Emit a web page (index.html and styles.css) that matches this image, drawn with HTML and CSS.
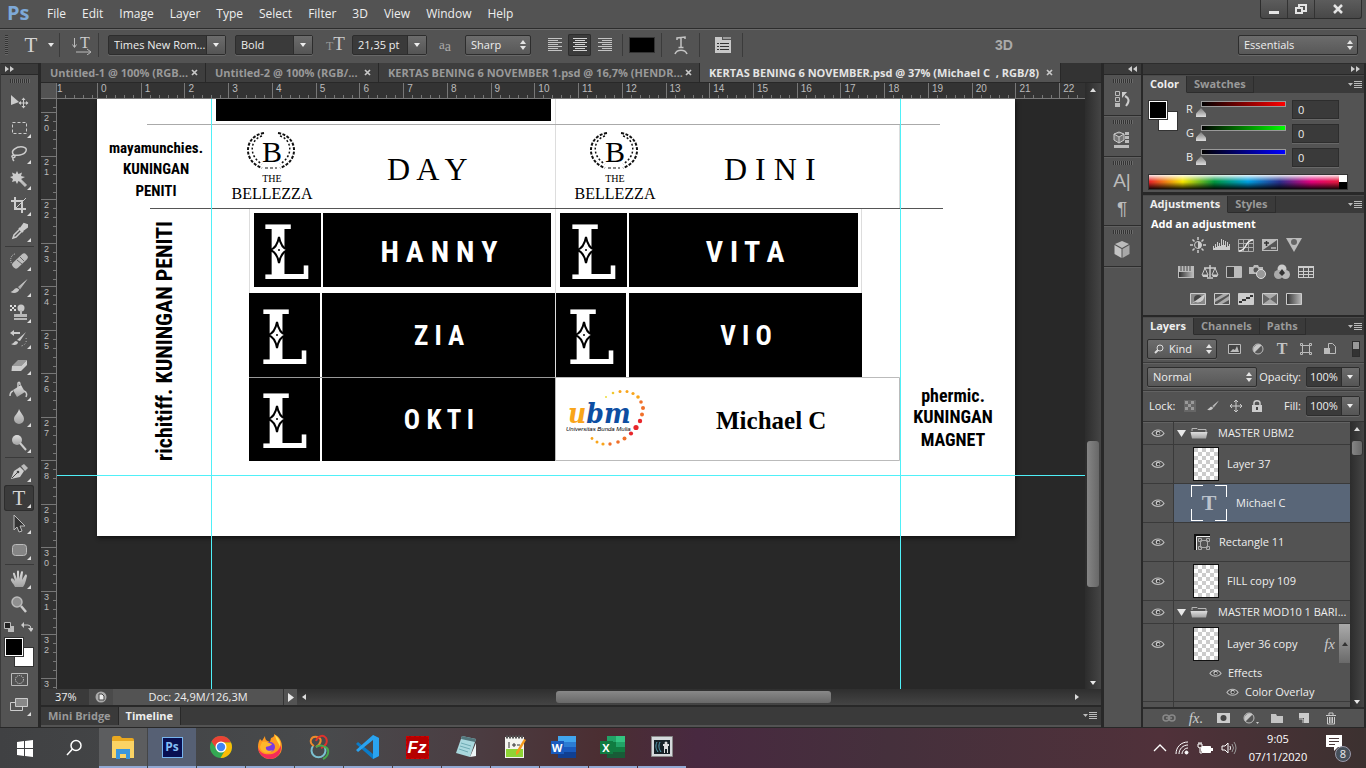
FILE: index.html
```html
<!DOCTYPE html>
<html lang="en">
<head>
<meta charset="utf-8">
<title>Photoshop - KERTAS BENING 6 NOVEMBER.psd</title>
<link rel="stylesheet" href="styles.css">
</head>
<body>
<svg class="defs" aria-hidden="true">
  <defs>
    <linearGradient id="metal" x1="0" y1="0" x2="0" y2="1"><stop offset="0" stop-color="#dedede"/><stop offset="1" stop-color="#a2a2a2"/></linearGradient>
    <linearGradient id="fade" x1="0" x2="1"><stop offset="0" stop-color="#333"/><stop offset="1" stop-color="#bbb"/></linearGradient>
    <pattern id="checker" width="8" height="8" patternUnits="userSpaceOnUse"><path fill="#fff" d="M0 0h8v8H0z"/><path fill="#ccc" d="M0 0h4v4H0zM4 4h4v4H4z"/></pattern>
  </defs>
  <symbol id="eye" viewBox="0 0 14 10"><path d="M1 5.5C3.500.8 10.500.8 13 5.500 10 9.500 4 9.500 1 5.500z" fill="#4b4b4b" stroke="#bdbdbd" stroke-width="1.200"/><circle cx="7" cy="5" r="2.300" fill="#ccc"/><circle cx="7.300" cy="5.300" r="1.300" fill="#333"/></symbol>
  <symbol id="folder" viewBox="0 0 18 12"><path d="M2 4V1.500h5l1 1h8V5" fill="none" stroke="#b5b5b5"/><path d="M.5 5h17L16 11.500H2z" fill="url(#metal)"/></symbol>
  <symbol id="caret" viewBox="0 0 6 4"><path d="M0 0h6L3 4z" fill="#e8e8e8"/></symbol>
  <symbol id="menu" viewBox="0 0 14 8"><path d="M0 2h5L2.500 5z" fill="#bbb"/><path d="M6 .5h8M6 2.500h8M6 4.500h8M6 6.500h8" stroke="#bbb"/></symbol>
  <symbol id="close" viewBox="0 0 7 7"><path d="M1 1l5 5M6 1L1 6" stroke="#c8c8c8" stroke-width="1.700"/></symbol>
  <symbol id="halfcircle" viewBox="0 0 14 14"><circle cx="7" cy="7" r="5" fill="#555" stroke="#bbb"/><path d="M3.500 10.500A5 5 0 0 1 10.500 3.500z" fill="#c8c8c8"/></symbol>
  <symbol id="brush" viewBox="0 0 20 20"><path d="M18.500 2L9 10l2 2.500z" fill="url(#metal)"/><path d="M8 11c-3 0-3 3-6.500 4 3 2 8 1 8.700-2.500z" fill="#c6c6c6"/></symbol>
</svg>

<div class="app">
  <header class="menubar">
    <span class="brand">Ps</span>
    <nav class="menus">
      <button>File</button><button>Edit</button><button>Image</button><button>Layer</button><button>Type</button><button>Select</button><button>Filter</button><button>3D</button><button>View</button><button>Window</button><button>Help</button>
    </nav>
    <div class="winctl">
      <button aria-label="Minimize"><svg width="12" height="12"><path d="M1 8h10v3H1z" fill="#e4e4e4"/></svg></button>
      <button aria-label="Restore"><svg width="14" height="12" fill="none" stroke="#e4e4e4" stroke-width="2"><path d="M5 4V2h7v6H9"/><path d="M2 5h6v5H2z"/></svg></button>
      <button class="wide" aria-label="Close"><svg width="12" height="12"><path d="M2 2l8 8M10 2l-8 8" stroke="#e4e4e4" stroke-width="2.500"/></svg></button>
    </div>
  </header>

  <div class="options">
    <span class="vgrip"></span>
    <button class="opt toolname" aria-label="Type tool"><span class="serif-t">T</span><svg width="6" height="4"><use href="#caret"/></svg></button>
    <button class="opt orient" aria-label="Toggle text orientation"><svg width="20" height="20" fill="none" stroke="#bbb"><text x="13" y="13" class="ot">T</text><path d="M2.500 3v9M.5 9.500l2 3 2-3M4 17h14M15 14l4 3-4 3"/></svg></button>
    <label class="combo w-font"><select aria-label="Font family"><option>Times New Rom...</option></select></label>
    <label class="combo w-style"><select aria-label="Font style"><option>Bold</option></select></label>
    <span class="tt"><small>T</small><b>T</b></span>
    <label class="combo w-size"><select aria-label="Font size"><option>21,35 pt</option></select></label>
    <span class="aa">a<sub>a</sub></span>
    <label class="drop w-aa"><select aria-label="Anti-aliasing"><option>Sharp</option></select></label>
    <div class="aligns">
      <button aria-label="Left align"><svg width="14" height="14" stroke="#c4c4c4"><path d="M0 .5h14M0 2.500h10M0 4.500h14M0 6.500h10M0 8.500h14M0 10.500h10M0 12.500h14"/></svg></button>
      <button class="on" aria-label="Center align"><svg width="14" height="14" stroke="#d4d4d4"><path d="M0 .5h14M2 2.500h10M0 4.500h14M2 6.500h10M0 8.500h14M2 10.500h10M0 12.500h14"/></svg></button>
      <button aria-label="Right align"><svg width="14" height="14" stroke="#c4c4c4"><path d="M0 .5h14M4 2.500h10M0 4.500h14M4 6.500h10M0 8.500h14M4 10.500h10M0 12.500h14"/></svg></button>
    </div>
    <button class="opt color" aria-label="Text color"><i></i></button>
    <button class="opt warp" aria-label="Warp text"><svg width="16" height="20" fill="none" stroke="#c4c4c4"><path d="M4 5V3l8-1v2M8 3v9M5.500 12.500h5" stroke-width="1.500"/><path d="M2 19c2-5 10-5 12 0" stroke-width="1.600"/></svg></button>
    <button class="opt cpanel" aria-label="Character panel"><svg width="18" height="18"><path d="M1 1h7v3h9v13H1z" fill="#c8c8c8"/><path d="M9 2h8" stroke="#999" stroke-width="2"/><path d="M3 7.500h2M6 7.500h9M3 10.500h2M6 10.500h9M3 13.500h2M6 13.500h9" stroke="#333"/></svg></button>
    <b class="three">3D</b>
    <label class="drop w-ws"><select aria-label="Workspace"><option>Essentials</option></select></label>
  </div>

  <main class="work">
    <aside class="tools">
      <div class="head"><svg width="9" height="6" fill="#ccc"><path d="M0 0l4 3-4 3zM5 0l4 3-4 3z"/></svg></div>
      <div class="grip"></div>
      <button class="nt" aria-label="Move"><svg width="20" height="20"><path d="M2 3l8 7-8 3z" fill="#ccc"/><path d="M14.500 6.500v9M10 11h9" stroke="#ccc"/><path d="M12.500 8l2-2.500 2 2.500zM12.500 14l2 2.500 2-2.500zM12 9l-2.500 2 2.500 2zM17 9l2.500 2-2.500 2z" fill="#ccc"/></svg></button>
      <button aria-label="Marquee"><svg width="20" height="20"><path d="M3.500 4.500h14v11h-14z" fill="none" stroke="#ccc" stroke-dasharray="3 2"/></svg></button>
      <button aria-label="Lasso"><svg width="20" height="20" fill="none" stroke="#ccc" stroke-width="1.500"><path d="M5 11C0 7 8 2 14 3c6 1 3 7-3 8-3 .6-5 .3-6 0-2 0-3 2-1 2.500s3-1.500 1-2.500M4 13c0 2-1 2 1 4"/></svg></button>
      <button aria-label="Magic wand"><svg width="20" height="20"><path d="M11 10l6 6" stroke="#bbb" stroke-width="3"/><path d="M8 1l1.500 3L13 2.500 12 6l4 1-4 2 1 3-3.500-1L8 14l-1.500-3L3 12l1-3-3-2 3-1-1-3.500L6.500 4z" fill="#ccc"/></svg></button>
      <button aria-label="Crop"><svg width="20" height="20" fill="none" stroke="#ccc" stroke-width="2"><path d="M6 1v12h11M2 5h11v12"/><path d="M7 12l10-10" stroke-width="1"/></svg></button>
      <button aria-label="Eyedropper"><svg width="20" height="20"><path d="M4 16l1-3 6-6 2 2-6 6z" fill="none" stroke="#ccc" stroke-width="1.500"/><path d="M10 6l4 4M12 6l3-4 3 1 0 2-4 3z" fill="#ccc" stroke="#ccc" stroke-width="2"/></svg></button>
      <hr>
      <button aria-label="Healing brush"><svg width="20" height="20"><path d="M6 3a5 6 0 0 0-2 11" fill="none" stroke="#ccc" stroke-dasharray="1 1"/><rect x="2" y="6.500" width="18" height="7" rx="3" fill="#bdbdbd" transform="rotate(-43 11 10)"/><path d="M8 9l5 4M11 6l4 4" stroke="#666"/></svg></button>
      <button aria-label="Brush"><svg width="20" height="20"><use href="#brush"/></svg></button>
      <button aria-label="Clone stamp"><svg width="20" height="20"><circle cx="12" cy="5" r="3.500" fill="#c8c8c8"/><path d="M11 7h2v4h5v3H5v-3h6zM5 15h13v2H5z" fill="#b8b8b8"/><path d="M1 2h2v2H1zM5 2h2v2H5zM3 4h2v2H3zM1 6h2v2H1zM5 6h2v2H5z" fill="#ddd"/></svg></button>
      <button aria-label="History brush"><svg width="20" height="20"><path d="M17 3L8 11l3 1zM7 12c-2 0-2 3-5 3 3 2 7 1 7-2zM1 4l4-3v2h6v2H5v2z" fill="#ccc"/><path d="M17 9a6 6 0 0 1-6 8" fill="none" stroke="#ccc" stroke-dasharray="1 2"/></svg></button>
      <button aria-label="Eraser"><svg width="20" height="20"><path d="M3 11l6-6h9l-6 6z" fill="#999"/><path d="M3 11h9v5H2.500zM12 11l6-6v5l-6 6z" fill="#ccc"/></svg></button>
      <button aria-label="Paint bucket"><svg width="20" height="20"><path d="M4 9l8-5 4 7-8 5z" fill="url(#metal)"/><path d="M9 7V2q2-2 2 2M4 10c-3 1-3 3-3 5M15 10c3 1 3 4 2 6" fill="none" stroke="#ccc" stroke-width="1.500"/></svg></button>
      <button aria-label="Blur"><svg width="20" height="20"><path d="M10 2c2 5 5 6 5 10a5 5 0 0 1-10 0c0-4 4-5 5-10z" fill="url(#metal)"/></svg></button>
      <button aria-label="Dodge"><svg width="20" height="20"><circle cx="8" cy="7" r="5" fill="url(#metal)"/><path d="M11 10l6 7" stroke="#ccc" stroke-width="2"/></svg></button>
      <hr>
      <button aria-label="Pen"><svg width="20" height="20"><path d="M2 17L5 9l6-4 4 4-4 6z" fill="#ccc"/><path d="M12 4l3-2 4 4-3 3z" fill="#bbb"/><path d="M3 16l6-6" stroke="#444"/><circle cx="9" cy="10" r="1.300" fill="#444"/></svg></button>
      <button class="on" aria-label="Type"><span class="serif-t">T</span></button>
      <button aria-label="Path selection"><svg width="20" height="20"><path d="M5 1l11 11-5 0 2 5-3 1-2-5-3 3z" fill="#333" stroke="#bbb"/></svg></button>
      <button aria-label="Rounded rectangle"><svg width="20" height="20"><rect x="3.500" y="4.500" width="14" height="11" rx="3" fill="#858585" stroke="#bbb"/></svg></button>
      <hr>
      <button aria-label="Hand"><svg width="20" height="20"><path d="M6 18C5 15 1 12 2 10s3 1 4 2L4 5c0-2 2-1 2 0l2 5V3c0-2 2-2 2 0v7l2-7c0-1 2-1 2 0l-1 8 3-5c1-1 2 0 2 1-1 4-2 9-4 11z" fill="url(#metal)"/></svg></button>
      <button class="nt" aria-label="Zoom"><svg width="20" height="20"><circle cx="8" cy="7" r="5" fill="#909090" stroke="#bbb" stroke-width="1.500"/><path d="M12 11l5 6" stroke="#ccc" stroke-width="2.500"/></svg></button>
      <div class="mini"><svg width="10" height="10"><path d="M4 4h6v6H4z" fill="#bbb"/><path d="M.5.5h6v6h-6z" fill="#222" stroke="#bbb"/></svg><svg width="12" height="10" fill="none" stroke="#ccc"><path d="M3 3h4q3 0 3 4"/><path d="M0 3l3-3v6zM7 6h6l-3 4z" fill="#ccc" stroke="none"/></svg></div>
      <div class="swatch"><i class="bg"></i><i class="fg"></i></div>
      <button class="nt" aria-label="Quick mask"><svg width="20" height="16"><path d="M2.500 1.500h16v12h-16z" fill="none" stroke="#bbb"/><circle cx="10.500" cy="7.500" r="4" fill="none" stroke="#ddd" stroke-dasharray="1 1"/></svg></button>
      <button aria-label="Screen mode"><svg width="20" height="20"><path d="M1.500 6.500h12v8h-12z" fill="#555" stroke="#ccc"/><path d="M6.500 2.500h12v8h-12z" fill="#888" stroke="#ccc"/></svg></button>
    </aside>

    <section class="docs">
      <div class="doctabs">
        <div class="dtab t1"><span>Untitled-1 @ 100% (RGB...</span><button aria-label="Close"><svg width="7" height="7"><use href="#close"/></svg></button></div>
        <div class="dtab t2"><span>Untitled-2 @ 100% (RGB/...</span><button aria-label="Close"><svg width="7" height="7"><use href="#close"/></svg></button></div>
        <div class="dtab t3"><span>KERTAS BENING 6 NOVEMBER 1.psd @ 16,7% (HENDR...</span><button aria-label="Close"><svg width="7" height="7"><use href="#close"/></svg></button></div>
        <div class="dtab t4 active"><span>KERTAS BENING 6 NOVEMBER.psd @ 37% (Michael C&nbsp; , RGB/8)</span><button aria-label="Close"><svg width="7" height="7"><use href="#close"/></svg></button></div>
      </div>
      <div class="view">
        <div class="corner"></div>
        <div class="hruler"><span class="first">1</span><span>0</span><span>1</span><span>2</span><span>3</span><span>4</span><span>5</span><span>6</span><span>7</span><span>8</span><span>9</span><span>10</span><span>11</span><span>12</span><span>13</span><span>14</span><span>15</span><span>16</span><span>17</span><span>18</span><span>19</span><span>20</span><span>21</span><span class="last">22</span></div>
        <div class="vscroll"><svg width="6" height="4"><path d="M0 4h6L3 0z" fill="#ddd"/></svg><i></i><svg width="6" height="4"><use href="#caret"/></svg></div>
        <div class="vruler"><span class="first"></span><span>2<br>0</span><span>2<br>1</span><span>2<br>2</span><span>2<br>3</span><span>2<br>4</span><span>2<br>5</span><span>2<br>6</span><span>2<br>7</span><span>2<br>8</span><span>2<br>9</span><span>3<br>0</span><span>3<br>1</span><span>3<br>2</span><span class="last">3</span></div>
        <div class="canvas">
          <svg class="paper" width="918" height="437" viewBox="97 99 918 437">
            <defs>
              <g id="wreath" fill="none" stroke="#111">
                <path d="M264 133C244 136 242 161 262 168M278 133C298 136 300 161 280 168" stroke-width="2" stroke-dasharray="3 1.500"/>
                <path d="M262 136C249 140 249 157 262 164M280 136C293 140 293 157 280 164" stroke-width="1.500" stroke-dasharray="2 2"/>
                <path d="M265 168h12" stroke-dasharray="3 2"/>
              </g>
              <g id="bellezza"><use href="#wreath"/><g text-anchor="middle"><text class="sf" x="272" y="162" font-size="30">B</text><text class="sf" x="272" y="182" font-size="10">THE</text><text class="sf" x="272" y="199" font-size="16">BELLEZZA</text></g></g>
              <g id="elle"><text class="ell" x="286" y="279" text-anchor="middle">L</text><path d="M279 237q2 11 9 13q-7 2-9 13q-2-11-9-13q7-2 9-13z" fill="#fff" stroke="#000" stroke-width="2"/><circle cx="279" cy="250" r="1" fill="#000"/></g>
            </defs>
            <path d="M97 99h918v437H97z" fill="#fff"/>
            <path d="M555.500 99v362M899.500 125v84M249.500 209v84M861.500 209v84" stroke="#ddd"/>
            <path d="M147 124.500h793" stroke="#aaa"/>
            <path d="M150 208.500h793" stroke="#555"/>
            <g fill="#000">
              <path d="M216 99h335v22H216z"/>
              <path d="M254 213h67v74h-67zM323 213h228v74H323zM560 213h67v74h-67zM629 213h229v74H629z"/>
              <path d="M249 293h71v84h-71zM322 293h233v84H322zM556 293h70v84h-70zM629 293h233v84H629z"/>
              <path d="M249 378h71v83h-71zM322 378h233v83H322z"/>
            </g>
            <path d="M249 377.500h306" stroke="#999"/>
            <path d="M555.500 377.500h344v83h-344z" fill="none" stroke="#bbb"/>
            <use href="#bellezza"/><use href="#bellezza" x="343"/>
            <use href="#elle"/><use href="#elle" x="307"/><use href="#elle" x="-2" y="85"/><use href="#elle" x="305" y="85"/><use href="#elle" x="-2" y="169"/>
            <text class="sf" x="387" y="180" font-size="32">D A Y</text>
            <text class="sf" x="724" y="180" font-size="32">D I N I</text>
            <g class="nb" fill="#fff" text-anchor="middle">
              <text x="439" y="262" font-size="30">H A N N Y</text><text x="745" y="262" font-size="30">V I T A</text>
              <text x="439" y="345" font-size="27">Z I A</text><text x="746" y="345" font-size="27">V I O</text><text x="439" y="429" font-size="27">O K T I</text>
            </g>
            <g class="nb" text-anchor="middle">
              <g font-size="15"><text x="156" y="153">mayamunchies.</text><text x="156" y="174">KUNINGAN</text><text x="156" y="196">PENITI</text></g>
              <g font-size="18"><text x="953" y="402">phermic.</text><text x="953" y="423">KUNINGAN</text><text x="953" y="446">MAGNET</text></g>
              <text x="-341" y="172" font-size="22" transform="rotate(-90)">richitiff. KUNINGAN PENITI</text>
            </g>
            <text class="sb" x="716" y="429" font-size="25">Michael C</text>
            <text class="ubm" x="568" y="423" font-size="28"><tspan fill="#f9a51a">u</tspan><tspan fill="#0d4ea2">bm</tspan></text>
            <text class="uni" x="566" y="431" font-size="6">Universitas Bunda Mulia</text>
            <g fill="#f9a51a"><circle cx="606" cy="397" r="1" fill="#ecdc3c"/><circle cx="613" cy="393" r="1.300" fill="#f0c830"/><circle cx="620" cy="391.500" r="1.500"/><circle cx="627" cy="391.500" r="1.500"/><circle cx="633" cy="393.500" r="1.600"/><circle cx="638" cy="397" r="1.800"/><circle cx="592" cy="438.500" r="1.400"/><circle cx="597" cy="442" r="1.500"/><circle cx="603" cy="444" r="1.600"/></g>
            <g fill="#f0702a"><circle cx="641" cy="402" r="1.800"/><circle cx="643" cy="408" r="2"/><circle cx="642" cy="414.500" r="2"/><circle cx="610" cy="444" r="1.700"/><circle cx="618" cy="442" r="1.800"/><circle cx="624.500" cy="438.500" r="2"/></g>
            <g fill="#e8262b"><circle cx="640" cy="421" r="2.200"/><circle cx="636" cy="427.500" r="2.600"/><circle cx="631" cy="433.500" r="2.100"/></g>
          </svg>
          <i class="gv g1"></i><i class="gv g2"></i><i class="gh"></i>
        </div>
        <div class="status">
          <span class="pct">37%</span>
          <span class="sico"><svg width="12" height="12"><circle cx="6" cy="6" r="5.500" fill="#aaa"/><path d="M4 3h3l2 2v4H4z" fill="#eee" stroke="#444"/></svg></span>
          <span class="docsize">Doc: 24,9M/126,3M</span>
          <span class="play"><svg width="6" height="9"><path d="M0 0l6 4.500L0 9z" fill="#e8e8e8"/></svg></span>
          <div class="hscroll"><svg width="4" height="6"><path d="M4 0v6L0 3z" fill="#ddd"/></svg><i></i><svg width="4" height="6"><path d="M0 0v6l4-3z" fill="#ddd"/></svg></div>
        </div>
      </div>
      <div class="btabs"><button>Mini Bridge</button><button class="active">Timeline</button><svg width="14" height="8"><use href="#menu"/></svg></div>
    </section>

    <aside class="dock">
      <div class="head"><svg width="9" height="6" fill="#ccc"><path d="M4 0v6L0 3zM9 0v6L5 3z"/></svg></div>
      <div class="dgroup"><div class="grip"></div><button aria-label="History"><svg width="18" height="20"><path d="M2.500 2.500h4v4h-4zM2.500 8.500h4v4h-4z" fill="none" stroke="#bbb"/><path d="M2 14h5v4H2z" fill="#bbb"/><path d="M13 17c4-5 3-8-1-10" fill="none" stroke="#ccc" stroke-width="2"/><path d="M14 3H9v6z" fill="#ccc"/></svg></button></div>
      <div class="dgroup"><div class="grip"></div><button aria-label="Properties"><svg width="18" height="20"><path d="M1 4l5-2 5 2v6l-5 3-5-3zM1 4l5 3 5-3M6 7v6" fill="#777" stroke="#ccc"/><path d="M12 2h4v3h-4zM12 6h4v3h-4zM12 10h4v3h-4zM1 15h15v3H1z" fill="#bbb"/></svg></button></div>
      <div class="dgroup"><div class="grip"></div><button class="glyph" aria-label="Character">A|</button><button class="glyph" aria-label="Paragraph">¶</button></div>
      <div class="dgroup"><div class="grip"></div><button aria-label="3D"><svg width="18" height="20"><path d="M9 1l7 3-7 4-7-4z" fill="#bbb"/><path d="M1.500 5l7 4v9l-7-4z" fill="#c4c4c4"/><path d="M16.500 5l-7 4v9l7-4z" fill="#a8a8a8"/></svg></button></div>
    </aside>

    <aside class="panels">
      <div class="head"><svg width="9" height="6" fill="#ccc"><path d="M0 0l4 3-4 3zM5 0l4 3-4 3z"/></svg></div>
      <section class="panel">
        <div class="ptabs"><button class="active">Color</button><button>Swatches</button><svg width="14" height="8"><use href="#menu"/></svg></div>
        <div class="colorbody">
          <div class="swatch cs"><i class="bg"></i><i class="fg"></i></div>
          <div class="sliders">
            <label for="r">R</label><input id="r" class="sl red" type="range" min="0" max="255" value="0"><input class="num" aria-label="Red value" value="0">
            <label for="g">G</label><input id="g" class="sl green" type="range" min="0" max="255" value="0"><input class="num" aria-label="Green value" value="0">
            <label for="b">B</label><input id="b" class="sl blue" type="range" min="0" max="255" value="0"><input class="num" aria-label="Blue value" value="0">
          </div>
        </div>
        <div class="spectrum"><i></i></div>
      </section>
      <section class="panel">
        <div class="ptabs"><button class="active">Adjustments</button><button>Styles</button><svg width="14" height="8"><use href="#menu"/></svg></div>
        <div class="adj">
          <h2>Add an adjustment</h2>
          <div class="arow">
            <svg width="18" height="16"><path d="M9 0v3M9 13v3M1 8h3M14 8h3M3.500 2.500l2 2M12.500 11.500l2 2M3.500 13.500l2-2M12.500 4.500l2-2" stroke="#ccc" stroke-width="1.500"/><circle cx="9" cy="8" r="3.500" fill="#555" stroke="#ccc"/><path d="M9 4.500a3.500 3.500 0 0 1 0 7z" fill="#ccc"/></svg>
            <svg width="18" height="16"><path d="M0 13V9h1v2h1V7h1v3h1V5h1v4h1V6h1v3h1V2h1v6h1V3h1v5h1V4h1v6h1V5h1v4h1V7h1v6z" fill="#ccc"/></svg>
            <svg width="18" height="16" fill="none"><path d="M1.500 2.500h15v12h-15zM1 6.500h16M1 10.500h16M6.500 2v12M11.500 2v12" stroke="#aaa"/><path d="M2 14c8 0 6-11 14-11" stroke="#eee" stroke-width="1.500"/></svg>
            <svg width="18" height="16"><path d="M1 2h16v12H1z" fill="#bbb"/><path d="M2 13L16 3v10z" fill="#555"/><path d="M3 6h5M5.500 4v5" stroke="#333" stroke-width="1.500"/><path d="M10 11h5" stroke="#eee"/></svg>
            <svg width="18" height="16"><path d="M1 1h16L9 15z" fill="#bbb"/><circle cx="9" cy="5" r="3" fill="#666"/></svg>
          </div>
          <div class="arow">
            <svg width="18" height="16"><path d="M1 2h16v12H1z" fill="#bbb"/><path d="M4 2v5M7 2v5M10 2v5M13 2v5" stroke="#444"/><path d="M2 8h14v5H2z" fill="url(#fade)"/></svg>
            <svg width="18" height="16" fill="none" stroke="#ccc"><path d="M9 1v12M6 14h6M3 4h12" stroke-width="1.500"/><path d="M4 4l-3 7h6zM14 4l-3 7h6z"/><path d="M1 11h6v2H2zM11 11h6l-1 2h-4z" fill="#ccc" stroke="none"/></svg>
            <svg width="18" height="16"><path d="M1.500 2.500h15v11h-15z" fill="#444" stroke="#bbb"/><path d="M9 3h7v10H9z" fill="#bbb"/></svg>
            <svg width="18" height="16"><path d="M0 3h4l1-2h4l1 2h4v7H0z" fill="#bbb"/><circle cx="7" cy="6" r="2.500" fill="#555"/><circle cx="12" cy="10" r="4.500" fill="#999" stroke="#ddd"/></svg>
            <svg width="18" height="16"><circle cx="9" cy="5" r="4.500" fill="#ccc"/><circle cx="5.500" cy="10.500" r="4.500" fill="#aaa"/><circle cx="12.500" cy="10.500" r="4.500" fill="#b8b8b8"/><path d="M9 5l3 4-3 3-3-3z" fill="#333"/></svg>
            <svg width="18" height="16"><path d="M1 2h16v12H1z" fill="#ccc"/><path d="M2 4h4v3H2zM7 4h4v3H7zM12 4h4v3h-4zM2 8h4v2H2zM7 8h4v2H7zM12 8h4v2h-4zM2 11h4v2H2zM7 11h4v2H7zM12 11h4v2h-4z" fill="#555"/></svg>
          </div>
          <div class="arow">
            <svg width="18" height="16"><path d="M1.500 2.500h15v11h-15z" fill="#888" stroke="#ccc"/><circle cx="9" cy="8" r="4" fill="#444"/><path d="M2 13L16 3c-1 8-6 10-10 8z" fill="#ccc"/></svg>
            <svg width="18" height="16"><path d="M1.500 2.500h15v11h-15z" fill="#555" stroke="#ccc"/><path d="M2 8l8-5h6L2 11zM4 13l12-8v4l-7 4z" fill="#aaa"/></svg>
            <svg width="18" height="16"><path d="M1.500 2.500h15v11h-15z" fill="#ccc" stroke="#ccc"/><path d="M2 10h3V8h4V6h4V4h3v2h-3v2H9v2H5v2H2z" fill="#333"/></svg>
            <svg width="18" height="16"><path d="M1.500 2.500h15v11h-15z" fill="#666" stroke="#ccc"/><path d="M2 3h14L9 8zM2 13l7-5 7 5z" fill="#aaa"/></svg>
            <svg width="18" height="16"><path d="M1.500 2.500h15v11h-15z" fill="url(#fade)" stroke="#ccc"/></svg>
          </div>
        </div>
      </section>
      <section class="panel layers">
        <div class="ptabs"><button class="active">Layers</button><button>Channels</button><button>Paths</button><svg width="14" height="8"><use href="#menu"/></svg></div>
        <div class="lrow kind">
          <label class="drop w-kind"><svg width="10" height="10" fill="none" stroke="#ddd"><circle cx="6" cy="4" r="3"/><path d="M4 6L1 9" stroke-width="2"/></svg><select aria-label="Filter type"><option>Kind</option></select></label>
          <svg width="14" height="14"><path d="M1.500 2.500h12v9h-12z" fill="#444" stroke="#bbb"/><path d="M3 10l3-3 2 1 2-4 2 6z" fill="#bbb"/></svg>
          <svg width="14" height="14"><use href="#halfcircle"/></svg>
          <span class="serif-s">T</span>
          <svg width="14" height="14" fill="none" stroke="#bbb"><path d="M3.500 3.500h7v7h-7z"/><path d="M1.500 1.500h2v2h-2zM10.500 1.500h2v2h-2zM1.500 10.500h2v2h-2zM10.500 10.500h2v2h-2z"/></svg>
          <svg width="14" height="14"><path d="M5.500 1.500h4l3 3v7h-7z" fill="none" stroke="#bbb"/><path d="M1 6h6v6H1z" fill="#bbb"/></svg>
          <i class="toggle"></i>
        </div>
        <div class="lrow blend">
          <label class="drop w-blend"><select aria-label="Blend mode"><option>Normal</option></select></label>
          <label class="lab" for="op">Opacity:</label><span class="combo w-pct"><select id="op"><option>100%</option></select></span>
        </div>
        <div class="lrow lock">
          <span>Lock:</span>
          <svg width="14" height="14"><path d="M1 1h12v12H1z" fill="#666"/><path d="M2 2h3v3H2zM8 2h3v3H8zM5 5h3v3H5zM2 8h3v3H2zM8 8h3v3H8z" fill="#999"/></svg>
          <svg width="16" height="14" viewBox="0 0 20 20"><use href="#brush"/></svg>
          <svg width="14" height="14" fill="none" stroke="#ccc"><path d="M7 1v12M1 7h12M5 3l2-2 2 2M5 11l2 2 2-2M3 5L1 7l2 2M11 5l2 2-2 2"/></svg>
          <svg width="12" height="14"><path d="M1 6h10v7H1z" fill="#ccc"/><path d="M3 6V4c0-3 6-3 6 0v2" fill="none" stroke="#ccc" stroke-width="1.500"/><path d="M6 8v3" stroke="#444" stroke-width="2"/></svg>
          <label class="lab" for="fill">Fill:</label><span class="combo w-pct"><select id="fill"><option>100%</option></select></span>
        </div>
        <div class="lscroll">
          <ul class="llist">
            <li class="grp"><span class="eye"><svg width="14" height="10"><use href="#eye"/></svg></span><span class="lcell"><svg width="9" height="7"><path d="M0 0h9L4.500 7z" fill="#e8e8e8"/></svg><svg width="18" height="12"><use href="#folder"/></svg><span class="nm">MASTER UBM2</span></span></li>
            <li><span class="eye"><svg width="14" height="10"><use href="#eye"/></svg></span><span class="lcell in"><svg class="thumb" width="24" height="32"><path d="M0 0h24v32H0z" fill="url(#checker)"/></svg><span>Layer 37</span></span></li>
            <li class="sel"><span class="eye"><svg width="14" height="10"><use href="#eye"/></svg></span><span class="lcell sm"><span class="tthumb">T</span><span>Michael C</span></span></li>
            <li><span class="eye"><svg width="14" height="10"><use href="#eye"/></svg></span><span class="lcell in"><svg width="16" height="16"><path d="M1 16V1h15" fill="none" stroke="#111" stroke-width="2"/><path d="M2.500 16V2.500H16" fill="none" stroke="#eee"/><g fill="none" stroke="#aaa"><path d="M6.500 6.500h7v7h-7z"/><path d="M4.500 4.500h3v3h-3zM12.500 4.500h3v3h-3zM4.500 12.500h3v3h-3zM12.500 12.500h3v3h-3z"/></g></svg><span>Rectangle 11</span></span></li>
            <li><span class="eye"><svg width="14" height="10"><use href="#eye"/></svg></span><span class="lcell in"><svg class="thumb" width="24" height="32"><path d="M0 0h24v32H0z" fill="url(#checker)"/></svg><span>FILL copy 109</span></span></li>
            <li class="grp"><span class="eye"><svg width="14" height="10"><use href="#eye"/></svg></span><span class="lcell"><svg width="9" height="7"><path d="M0 0h9L4.500 7z" fill="#e8e8e8"/></svg><svg width="18" height="12"><use href="#folder"/></svg><span class="nm">MASTER MOD10 1 BARI...</span></span></li>
            <li class="fxrow"><span class="eye"><svg width="14" height="10"><use href="#eye"/></svg></span><span class="stack"><span class="lcell in"><svg class="thumb" width="24" height="32"><path d="M0 0h24v32H0z" fill="url(#checker)"/></svg><span>Layer 36 copy</span><em class="fx">fx</em><span class="fxtoggle"><svg width="6" height="4"><path d="M0 4h6L3 0z" fill="#333"/></svg></span></span><span class="eff"><svg width="13" height="10"><use href="#eye"/></svg>Effects</span><span class="eff e2"><svg width="13" height="10"><use href="#eye"/></svg>Color Overlay</span></span></li>
            <li class="rest"><span class="eye"></span></li>
          </ul>
          <div class="vscroll lsb"><svg width="6" height="4"><path d="M0 4h6L3 0z" fill="#ddd"/></svg><i></i><svg width="6" height="4"><use href="#caret"/></svg></div>
        </div>
        <div class="lfoot">
          <button aria-label="Link layers"><svg width="16" height="12" fill="none" stroke="#888" stroke-width="1.500"><rect x="2" y="3" width="6" height="6" rx="3"/><rect x="8" y="3" width="6" height="6" rx="3"/><path d="M5 6h6"/></svg></button>
          <button aria-label="Layer style"><em class="fx">fx.</em></button>
          <button aria-label="Add mask"><svg width="14" height="12"><path d="M1 1h13v10H1z" fill="#ccc"/><circle cx="7.500" cy="6" r="3" fill="#444"/></svg></button>
          <button aria-label="New adjustment layer"><svg width="17" height="14"><use href="#halfcircle" width="14" height="14"/><path d="M14 11h3l-1.500 2z" fill="#ccc"/></svg></button>
          <button aria-label="New group"><svg width="14" height="12"><path d="M1 2h5l1 2h6v7H1z" fill="#c4c4c4"/></svg></button>
          <button aria-label="New layer"><svg width="12" height="12"><path d="M1 1h10v10H6V6H1z" fill="#ccc"/><path d="M1 7h4v4" fill="none" stroke="#ccc"/></svg></button>
          <button aria-label="Delete layer"><svg width="12" height="13" fill="none" stroke="#ccc"><path d="M1 3.500h10M4 3V1h4v2M2.500 5v7h7V5M4.500 5v6M6 5v6M7.500 5v6"/></svg></button>
        </div>
      </section>
    </aside>
  </main>

  <footer class="taskbar">
    <button aria-label="Start"><svg width="17" height="17"><path d="M0 2l7-1v7H0zM8 1l8-1v8H8zM0 9h7v7l-7-1zM8 9h8v8l-8-1z" fill="#fff"/></svg></button>
    <button aria-label="Search"><svg width="18" height="18" fill="none" stroke="#fff" stroke-width="1.500"><circle cx="11" cy="6.500" r="5"/><path d="M7.500 10L2 16"/></svg></button>
    <button class="run lit" aria-label="File Explorer"><svg width="24" height="24"><path d="M1 3q0-2 2-2h6l2 2h10q2 0 2 2v16H1z" fill="#e9a820"/><path d="M1 6h22v17H1z" fill="#fbd364"/><path d="M5 14h14v10h-4v-5H9v5H5z" fill="#3a96dd"/></svg></button>
    <button class="run act" aria-label="Photoshop"><span class="psicon">Ps</span></button>
    <button class="run" aria-label="Chrome"><svg width="24" height="24"><circle cx="12" cy="12" r="11" fill="#34a853"/><path d="M2.500 6.500A11 11 0 0 1 22 7.500H12L7.500 14z" fill="#ea4335"/><path d="M22 7.500A11 11 0 0 1 11.500 23l5-8.500L14 7.500z" fill="#fbbc05"/><circle cx="12" cy="12" r="5.500" fill="#fff"/><circle cx="12" cy="12" r="4.200" fill="#4285f4"/></svg></button>
    <button class="run" aria-label="Firefox"><svg width="26" height="26"><path d="M14 4c4-1 3-3 3-4 6 3 8 8 8 13a12 12 0 0 1-24 0C1 9 2 7 3 5l2 2 3-5c0 4 2 5 5 6z" fill="#ff9a1f"/><path d="M1 13c2 7 8 8 14 7 4-1 8-5 9-9 1 9-5 14-11 14S1 20 1 13z" fill="#f52c5a"/><circle cx="13" cy="13" r="5" fill="#7a3be0"/><path d="M5 8c5-1 6 1 10 2-2 3-5 2-6 3-1 3 3 5 7 3-4 5-12 3-13-3z" fill="#ffb62b"/><path d="M18 1c5 4 6 8 5 12-1-4-4-6-5-12z" fill="#ffe14a"/></svg></button>
    <button class="run" aria-label="Coil"><svg width="26" height="26" fill="none" stroke-width="2"><path d="M18 12a7 7 0 1 1-11 0" stroke="#7bc0d0"/><path d="M8 12C2 8 5 2 11 3s4 7-1 10" stroke="#f08a2a"/><path d="M10 7c2-5 7-7 10-3 2 4 0 8-5 10" stroke="#e0322c"/><path d="M19 13c5 2 4 9-2 12M10 13c3-2 6-2 9 0" stroke="#47a84d"/></svg></button>
    <button class="run" aria-label="Visual Studio Code"><svg width="26" height="26"><path d="M18 1l6 3v18l-6 3L1 10l2-2 15 12z" fill="#0a7cc9"/><path d="M18 1l6 3v18l-6 3V6L3 18l-2-2z" fill="#2aa3ef"/></svg></button>
    <button class="run" aria-label="FileZilla"><span class="fz">Fz</span></button>
    <button class="run" aria-label="Notepad"><svg width="24" height="26"><path d="M8 2l14 3-6 18-14-4z" fill="#a9d8de"/><path d="M8 2l14 3-1 3L7 5z" fill="#52777d"/><path d="M16 23l6-14v13z" fill="#edf6f7"/><path d="M7 9l10 3M6 12l10 3M5 15l9 3" stroke="#6eabb4"/></svg></button>
    <button class="run" aria-label="Notepad++"><svg width="24" height="26"><path d="M2 3h19v21H2z" fill="#f4f4f0"/><path d="M3 15h17v8H3z" fill="#8ed435"/><path d="M3 3h17" stroke="#555" stroke-width="3" stroke-dasharray="2 1"/><path d="M6 8v6M9 11h4M11 9v4M14 11h3" stroke="#333"/><path d="M21 5l2 1-8 14-2 1v-3z" fill="#f39a1d"/></svg></button>
    <button class="run multi" aria-label="Word"><svg width="26" height="24"><path d="M7 1h18v6H7z" fill="#41a5ee"/><path d="M7 7h18v5H7z" fill="#2b7cd3"/><path d="M7 12h18v5H7z" fill="#185abd"/><path d="M7 17h18v6H7z" fill="#103f91"/><path d="M0 6h13v13H0z" fill="#185abd"/><text x="6" y="17" class="offtx">W</text></svg></button>
    <button class="run multi" aria-label="Excel"><svg width="26" height="24"><path d="M7 1h9v6H7z" fill="#21a366"/><path d="M16 1h9v6h-9z" fill="#33c481"/><path d="M7 7h9v10H7z" fill="#107c41"/><path d="M16 7h9v5h-9z" fill="#21a366"/><path d="M16 12h9v5h-9z" fill="#107c41"/><path d="M7 17h18v6H7z" fill="#185c37"/><path d="M0 6h13v13H0z" fill="#107c41"/><text x="6" y="17" class="offtx">X</text></svg></button>
    <button class="run" aria-label="Capture"><svg width="22" height="24"><path d="M.5 1.500h21v20H.5z" fill="#d5d9dc" stroke="#888"/><path d="M3 5h16v14H3z" fill="#172126"/><path d="M6 7c-2 4-1 7 1 10M9 7c-2 4-1 7 1 10" stroke="#58a2b8" fill="none"/><path d="M12 9h6v2h-1v7h-1v-4h-2v4h-1v-7h-1z" fill="#ddd"/><circle cx="15" cy="8" r="1.500" fill="#ddd"/></svg></button>
    <div class="tray">
      <svg width="14" height="8"><path d="M1 7l6-6 6 6" fill="none" stroke="#fff" stroke-width="1.300"/></svg>
      <svg width="14" height="14" fill="none" stroke="#fff"><path d="M1 13C1 6 6 1 13 1M4 13c0-5 4-9 9-9M7 13c0-3 3-6 6-6"/><circle cx="11.500" cy="11.500" r="1.500" fill="#fff"/></svg>
      <svg width="16" height="14"><path d="M4.500 5.500h9v6h-9z" fill="#fff" stroke="#fff"/><path d="M14 7h2v3h-2z" fill="#fff"/><path d="M1 3h4v3q-2 2-4 0zM2 1v2M4 1v2M3 7v5h2" stroke="#fff" fill="#4a3034"/></svg>
      <svg width="16" height="14" fill="none" stroke="#fff"><path d="M1 5h3l3-3v10L4 9H1z"/><path d="M9 5q1 2 0 4"/><path d="M11 3q3 4 0 8M13 1q4 6 0 12" stroke="#999"/></svg>
      <div class="clock"><span>9:05</span><span>07/11/2020</span></div>
      <div class="note"><svg width="18" height="18"><path d="M1 1h16v12h-4l-4 4v-4H1z" fill="#fff"/><path d="M4 4.500h10M4 7.500h10M4 10.500h6" stroke="#4a3a3a"/></svg><b>8</b></div>
    </div>
  </footer>
</div>
</body>
</html>
```
FILE: styles.css
```css
* { box-sizing: border-box; }
body { margin: 0; background: #282828; color: #eee; font: 11px/14px "Open Sans", "Noto Sans", sans-serif; }
button { margin: 0; padding: 0; border: 0; background: none; color: inherit; font: inherit; display: flex; align-items: center; justify-content: center; }
select, input { font: inherit; color: inherit; margin: 0; }
svg { display: block; flex: none; }
i { display: block; }
.defs { position: absolute; width: 0; height: 0; }
.app { display: flex; flex-direction: column; height: 100vh; overflow: hidden; }

/* menu bar */
.menubar { flex: none; display: flex; height: 28px; background: #535353; }
.brand { width: 38px; padding-left: 7px; color: #7ea9d8; font: bold 20px/26px "Open Sans", sans-serif; }
.menus { display: flex; font-size: 12px; padding-left: 1px; }
.menus button { padding: 0 8px; }
.winctl { margin: 0 4px 0 auto; display: flex; height: 19px; border: 1px solid #2d2d2d; border-top: 0; border-radius: 0 0 3px 3px; background: linear-gradient(#5c5c5c, #484848); }
.winctl button { width: 27px; border-right: 1px solid #333; }
.winctl .wide { width: 46px; border: 0; }

/* options bar */
.options { flex: none; display: flex; align-items: center; height: 35px; padding: 0 8px 2px 5px; background: #535353; border-top: 1px solid #2d2d2d; box-shadow: inset 0 1px #6a6a6a; }
.vgrip { width: 3px; height: 20px; background: repeating-linear-gradient(#333 0 1px, #666 1px 2px); }
.opt { height: 24px; border-right: 1px solid #3b3b3b; }
.toolname { width: 52px; gap: 11px; padding-left: 12px; }
.orient { width: 39px; padding-left: 6px; }
.ot { font: 16px "Liberation Serif", serif; fill: #ccc; stroke: none; text-anchor: middle; }
.serif-t { font: 21px/22px "Liberation Serif", serif; color: #d4d4d4; }
.serif-s { font: bold 16px/16px "Liberation Serif", serif; color: #c4c4c4; text-align: center; }
.combo, .drop { display: grid; align-items: center; height: 20px; border: 1px solid #2d2d2d; border-radius: 2px; background: #3a3a3a; box-shadow: 0 1px #686868; }
.combo select, .drop select { grid-area: 1 / 1; width: 100%; height: 18px; appearance: none; border: 0; padding: 0 0 0 5px; background: none; }
.combo::after { content: ""; grid-area: 1 / 1; justify-self: end; width: 18px; height: 18px; pointer-events: none; border-left: 1px solid #2d2d2d; background: linear-gradient(#6c6c6c, #555); }
.combo::before { content: ""; grid-area: 1 / 1; justify-self: end; z-index: 1; margin-right: 6px; border: 3px solid transparent; border-top: 4px solid #eee; border-bottom: 0; pointer-events: none; }
.drop { background: linear-gradient(#6c6c6c, #585858); }
.drop::after, .drop::before { content: ""; grid-area: 1 / 1; justify-self: end; margin-right: 4px; border: 3px solid transparent; pointer-events: none; }
.drop::before { align-self: start; margin-top: 4px; border-bottom: 4px solid #e4e4e4; border-top: 0; }
.drop::after { align-self: end; margin-bottom: 4px; border-top: 4px solid #e4e4e4; border-bottom: 0; }
.w-font { width: 118px; margin-left: 9px; }
.w-style { width: 78px; margin-left: 9px; }
.w-size { width: 75px; margin-left: 6px; }
.w-aa { width: 66px; margin-left: 10px; }
.tt { display: flex; align-items: baseline; width: 20px; margin-left: 13px; font: 19px/20px "Liberation Serif", serif; color: #ccc; }
.tt small { font-size: 12px; color: #999; }
.tt b { font-weight: normal; }
.aa { width: 16px; margin-left: 12px; color: #aaa; font: 13px/16px "Liberation Serif", serif; }
.aa sub { line-height: 8px; font-size: 14px; vertical-align: -2px; }
.aligns { display: flex; gap: 2px; margin-left: 12px; padding-right: 6px; border-right: 1px solid #3b3b3b; }
.aligns button { width: 23px; height: 22px; border-radius: 2px; }
.aligns .on { background: #3b3b3b; box-shadow: inset 0 0 0 1px #2d2d2d; }
.color { width: 39px; }
.color i { width: 26px; height: 16px; background: #000; border: 1px solid #333; }
.warp { width: 38px; }
.cpanel { width: 43px; padding-left: 4px; }
.three { margin-left: 252px; font: bold 14px/16px "Liberation Sans", sans-serif; color: #aaa; }
.w-ws { width: 120px; margin-left: auto; }

.work { flex: 1; min-height: 0; display: flex; background: #282828; }
.head { height: 12px; flex: none; display: flex; align-items: center; background: #3a3a3a; border-top: 1px solid #2d2d2d; border-bottom: 1px solid #282828; padding: 0 4px; }
.grip { height: 4px; width: 20px; margin: 4px auto 0; background: repeating-linear-gradient(90deg, #333 0 1px, #6a6a6a 1px 2px); }

/* tool column */
.tools { width: 38px; flex: none; display: flex; flex-direction: column; background: #535353; border-left: 1px solid #3a3a3a; margin-right: 3px; }
.tools .grip { margin-bottom: 6px; }
.tools button { position: relative; height: 26px; margin: 0 4px 0 3px; flex: none; }
.tools button:not(.nt)::after { content: ""; position: absolute; right: 3px; bottom: 3px; border: 2px solid; border-color: transparent #ddd #ddd transparent; }
.tools .on { background: #3b3b3b; border-radius: 3px; box-shadow: inset 0 0 0 1px #2d2d2d; }
.tools hr { margin: 1px 4px; border: 0; height: 1px; background: #3a3a3a; flex: none; }
.mini { display: flex; justify-content: space-between; align-items: center; height: 17px; padding: 0 5px 0 3px; flex: none; }
.swatch { display: grid; width: 30px; height: 30px; margin: 2px auto 0 3px; flex: none; }
.swatch i { grid-area: 1 / 1; width: 20px; height: 20px; }
.swatch .bg { place-self: end; background: #fff; border: 1px solid #333; }
.swatch .fg { background: #000; border: 1px solid #fff; outline: 1px solid #333; z-index: 1; width: 18px; height: 18px; margin: 1px; }

/* document area */
.docs { flex: 1; min-width: 0; display: flex; flex-direction: column; }
.doctabs { flex: none; display: flex; height: 20px; background: #333; border-bottom: 1px solid #282828; overflow: hidden; }
.dtab { display: flex; align-items: center; justify-content: space-between; padding: 0 7px 0 9px; background: #3e3e3e; border-right: 1px solid #282828; color: #999; font-weight: bold; white-space: nowrap; flex: none; }
.dtab.active { background: #535353; color: #e4e4e4; }
.t1 { width: 165px; } .t2 { width: 173px; } .t3 { width: 321px; } .t4 { width: 361px; }
.view { flex: 1; min-height: 0; display: grid; grid-template: 16px 1fr 17px / 16px 1fr 16px; }
.corner { background: #535353; border-right: 1px solid #777; border-bottom: 1px solid #777; }
.hruler { display: flex; overflow: hidden; background: #333; border-bottom: 1px solid #777; color: #bbb; font: 10px/12px "Liberation Sans", sans-serif; }
.hruler span { flex: 1; min-width: 0; padding-left: 3px; border-left: 1px solid #777; background: repeating-linear-gradient(90deg, transparent 0 8px, #777 8px 9px) 0 12px / 100% 3px no-repeat; }
.hruler .first { flex: 0 0 40px; border: 0; padding: 0; }
.hruler .last { flex: 0 0 26px; }
.vruler { display: flex; flex-direction: column; overflow: hidden; background: #333; border-right: 1px solid #777; color: #bbb; font: 9px/10px "Liberation Sans", sans-serif; }
.vruler span { flex: 1; min-height: 0; padding: 0 0 0 3px; border-top: 1px solid #777; background: repeating-linear-gradient(transparent 0 8px, #777 8px 9px) 12px 0 / 3px 100% no-repeat; }
.vruler .first { flex: 0 0 13px; border: 0; }
.vruler .last { flex: 0 0 11px; }
.vscroll { grid-column: 3; grid-row: 1 / 3; display: flex; flex-direction: column; align-items: center; justify-content: space-between; padding: 5px 0 4px; background: linear-gradient(90deg, #2c2c2c, #454545); }
.vscroll i { width: 12px; height: 146px; margin-top: 255px; border-radius: 3px; background: linear-gradient(90deg, #858585, #686868); }
.canvas { position: relative; overflow: hidden; background: #282828; }
.paper { position: absolute; left: 40px; top: 0; box-shadow: 1px 2px 4px #111; }
.gv, .gh { position: absolute; background: #4ff0f8; }
.gv { top: 0; bottom: 0; width: 1px; }
.g1 { left: 154px; } .g2 { left: 843px; }
.gh { left: 0; right: 0; top: 376px; height: 1px; }
.sf { font-family: "Liberation Serif", serif; }
.sb { font-family: "Liberation Serif", serif; font-weight: bold; }
.nb { font-family: "Liberation Sans Narrow", "Roboto Condensed", "Open Sans Condensed", "Liberation Sans", sans-serif; font-weight: bold; }
.ell { font: bold 75px "DejaVu Serif Condensed", "DejaVu Serif", serif; fill: #fff; }
.ubm { font-family: "DejaVu Serif Condensed", "DejaVu Serif", serif; font-weight: bold; font-style: italic; }
.uni { font-family: "Liberation Sans", sans-serif; font-style: italic; }
.status { grid-column: 1 / 4; display: flex; align-items: stretch; background: #3a3a3a; border-bottom: 1px solid #282828; }
.status > span { display: flex; align-items: center; }
.pct { width: 48px; padding-left: 14px; }
.sico { width: 24px; padding-left: 6px; background: #4a4a4a; }
.docsize { width: 171px; justify-content: center; background: #535353; border-right: 1px solid #333; }
.play { width: 13px; justify-content: center; background: #535353; }
.hscroll { flex: 1; display: flex; justify-content: space-between; align-items: center; padding: 0 22px 0 5px; background: linear-gradient(#2f2f2f, #444); }
.hscroll i { width: 275px; height: 12px; margin-left: 5px; border-radius: 3px; background: linear-gradient(#888, #686868); }
.btabs { flex: none; display: flex; height: 20px; margin-top: 1px; background: #3a3a3a; border-bottom: 2px solid #535353; font-weight: bold; color: #999; }
.btabs button { padding: 0 7px; border-right: 1px solid #282828; }
.btabs .active { background: #535353; color: #eee; }
.btabs svg { margin: 5px 4px 0 auto; }

/* icon dock */
.dock { width: 37px; flex: none; margin-left: 3px; background: #535353; }
.dock .head { justify-content: flex-end; }
.dgroup { padding-bottom: 2px; border-bottom: 1px solid #2d2d2d; box-shadow: 0 1px #606060; }
.dgroup button { width: 36px; height: 28px; margin-top: 2px; }
.dgroup button + button { margin-top: 0; }
.dgroup .glyph { font: 19px/28px "Liberation Sans", sans-serif; color: #bbb; }

/* panels */
.panels { width: 223px; flex: none; margin-left: 2px; padding-right: 2px; display: flex; flex-direction: column; }
.panels .head { justify-content: flex-end; }
.panel { background: #535353; margin-bottom: 2px; flex: none; }
.ptabs { display: flex; height: 18px; background: #3a3a3a; font-weight: bold; color: #999; border-top: 1px solid #4a4a4a; }
.ptabs button { padding: 0 7px; border-right: 1px solid #2d2d2d; border-bottom: 1px solid #2d2d2d; }
.ptabs .active { background: #535353; color: #eee; border-bottom-color: #535353; }
.ptabs svg { margin: 5px 2px 0 auto; }
.colorbody { display: flex; padding: 7px 0 0 5px; }
.cs { margin: 0; height: 31px; }
.sliders { display: grid; grid-template-columns: 10px 95px 47px; row-gap: 5px; margin-left: 8px; align-items: start; }
.sliders label { line-height: 17px; }
.num { width: 47px; height: 19px; margin-left: 1px; padding: 0 0 0 5px; background: #3a3a3a; border: 1px solid #2d2d2d; box-shadow: 0 1px #686868; }
.sl { appearance: none; width: 95px; height: 17px; border: 0; background: none 6px 2px / 83px 4px no-repeat; }
.sl::-webkit-slider-runnable-track { height: 17px; }
.sl::-webkit-slider-thumb { appearance: none; width: 10px; height: 9px; margin-top: 8px; background: linear-gradient(#777, #ddd); clip-path: polygon(50% 0, 100% 60%, 100% 100%, 0 100%, 0 60%); }
.sl { background-size: 83px 4px, 85px 6px; background-position: 6px 2px, 5px 1px; }
.red { background-image: linear-gradient(90deg, #000, #f00), linear-gradient(#999, #999); }
.green { background-image: linear-gradient(90deg, #000, #0f0), linear-gradient(#999, #999); }
.blue { background-image: linear-gradient(90deg, #000, #00f), linear-gradient(#999, #999); }
.spectrum { display: flex; width: 200px; height: 16px; margin: 7px 0 0 5px; border: 1px solid #333; background: linear-gradient(rgba(255,255,255,.9), rgba(255,255,255,0) 45%, rgba(0,0,0,0) 50%, rgba(0,0,0,.9)), linear-gradient(90deg, #e8222a, #f7e600 17%, #00963f 33%, #009fe0 50%, #2b2f8c 66%, #e3007b 82%, #e8222a); }
.spectrum i { width: 8px; margin-left: auto; background: linear-gradient(#fff 50%, #000 0); }
.panel:has(.spectrum) { padding-bottom: 2px; margin-bottom: 3px; }
.adj { padding: 4px 0 8px; }
.adj h2 { margin: 0 0 6px 8px; font: bold 11px/14px "Open Sans", sans-serif; color: #fff; }
.arow { display: flex; justify-content: center; gap: 6px; padding-right: 16px; margin-bottom: 11px; }
.arow:last-child { margin-bottom: 0; }
.layers { flex: 1; min-height: 0; margin: 0; display: flex; flex-direction: column; }
.layers .ptabs { flex: none; }
.lrow { display: flex; align-items: center; height: 28px; flex: none; padding: 0 4px; border-bottom: 1px solid #3a3a3a; box-shadow: 0 1px #626262; }
.kind { gap: 10px; }
.w-kind { width: 70px; }
.w-kind svg { grid-area: 1 / 1; margin-left: 6px; }
.w-kind select { padding-left: 21px; }
.kind .serif-s { width: 14px; }
.toggle { width: 8px; height: 16px; margin-left: auto; border: 1px solid #2d2d2d; background: linear-gradient(#999 50%, #333 0); }
.w-blend { width: 110px; }
.lab { margin-left: auto; margin-right: 5px; }
.w-pct { width: 54px; }
.w-pct select { padding-left: 3px; }
.w-pct::after { width: 17px; }
.lock { gap: 8px; height: 31px; padding-left: 6px; border-bottom-color: #333; }
.lock .lab { margin-right: -3px; }
.lscroll { flex: 1; min-height: 0; display: flex; overflow: hidden; }
.llist { flex: 1; margin: 0; padding: 0; list-style: none; overflow: hidden; }
.llist li { display: flex; height: 39px; border-bottom: 1px solid #3a3a3a; }
.llist .grp { height: 23px; }
.llist .fxrow { height: 78px; }
.eye { width: 31px; flex: none; display: flex; align-items: center; justify-content: center; border-right: 1px solid #3a3a3a; }
.lcell { flex: 1; display: flex; align-items: center; gap: 9px; padding-left: 3px; white-space: nowrap; }
.grp .lcell { gap: 4px; }
.nm { margin-left: 6px; }
.in { padding-left: 20px; }
.sm { padding-left: 17px; }
.thumb { outline: 1px solid #111; }
.sel .lcell { background: #596678; }
.tthumb { width: 36px; height: 36px; text-align: center; font: bold 22px/36px "Liberation Serif", serif; color: #bcc3cc; background: linear-gradient(#fff, #fff) 0 0 / 12px 1px, linear-gradient(#fff, #fff) 0 0 / 1px 12px, linear-gradient(#fff, #fff) 100% 0 / 12px 1px, linear-gradient(#fff, #fff) 100% 0 / 1px 12px, linear-gradient(#fff, #fff) 0 100% / 12px 1px, linear-gradient(#fff, #fff) 0 100% / 1px 12px, linear-gradient(#fff, #fff) 100% 100% / 12px 1px, linear-gradient(#fff, #fff) 100% 100% / 1px 12px; background-repeat: no-repeat; }
.stack { flex: 1; display: flex; flex-direction: column; }
.stack .lcell { flex: 0 0 39px; }
.fxrow .eye { padding-bottom: 38px; }
.fx { font: italic 15px/16px "Liberation Serif", serif; color: #ccc; margin-left: auto; }
.fxtoggle { width: 11px; height: 39px; margin-left: -5px; display: flex; align-items: center; justify-content: center; background: linear-gradient(#aaa, #6a6a6a); }
.eff { display: flex; align-items: center; gap: 6px; height: 19px; padding-left: 35px; }
.e2 { padding-left: 52px; }
.lsb { width: 14px; padding: 5px 0 3px; }
.lsb i { height: 16px; margin: 9px 0 auto; border: 1px solid #333; }
.lfoot { flex: none; display: flex; justify-content: space-between; height: 20px; padding: 0 25px 0 18px; border-top: 2px solid #2d2d2d; }
.lfoot button { width: 16px; }
.lfoot .fx { margin: 0; }

/* taskbar */
.taskbar { flex: none; display: flex; height: 41px; padding-left: 1px; border-top: 1px solid #282828; background: linear-gradient(90deg, #404143, #484a4c 24%, #4b3e43 34%, #4b2e32 44%, #482940 51%, #45303c 65%, #50313a 85%, #3c3130); }
.taskbar > button { width: 48px; margin-right: 1px; }
.run { border-bottom: 2px solid #92a9d4; background-clip: padding-box; }
.lit { background-color: #5c5d5f; }
.act { background-color: #566074; }
.psicon { width: 21px; height: 21px; background: #080f52; border: 1px solid #76b4ef; color: #84bff5; font: bold 12px/18px "Open Sans", sans-serif; text-align: center; }
.fz { width: 23px; height: 23px; background: #b60000; color: #fff; font: italic bold 17px/21px "Liberation Sans", sans-serif; text-align: center; border: 1px dashed #d40000; }
.offtx { font: bold 11px "Open Sans", sans-serif; fill: #fff; text-anchor: middle; }
.tray { margin-left: auto; display: flex; align-items: center; gap: 8px; padding-right: 15px; }
.clock { display: flex; flex-direction: column; align-items: center; line-height: 18px; font-size: 11px; color: #fff; width: 66px; }
.note { display: grid; width: 26px; height: 28px; margin-left: 6px; }
.note svg { grid-area: 1 / 1; }
.note b { grid-area: 1 / 1; place-self: end; width: 16px; height: 16px; border-radius: 8px; background: #46505a; border: 1px solid #99a; font: 11px/14px "Open Sans", sans-serif; text-align: center; }
```
